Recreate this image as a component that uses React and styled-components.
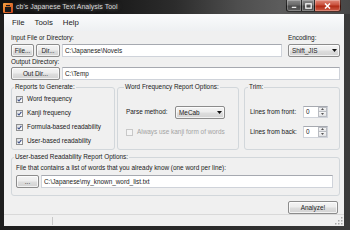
import React from "react";
import styled, { createGlobalStyle } from "styled-components";

const GlobalStyle = createGlobalStyle`
  html, body {
    margin: 0;
    padding: 0;
    background: #282828;
  }
  body {
    width: 350px;
    height: 230px;
    overflow: hidden;
    font-family: "Liberation Sans", Arial, sans-serif;
  }
`;

/// WINDOW CHROME
const Window = styled.div`
  width: 350px;
  height: 230px;
  display: flex;
  flex-direction: column;
  background: linear-gradient(90deg, #1e1e1e 0%, #2a2a2a 60%, #3a3a3a 100%);
`;

const TitleBar = styled.div`
  height: 14px;
  flex: none;
  display: flex;
  align-items: flex-start;
  background: linear-gradient(
    90deg,
    #111 0%,
    #181818 30%,
    #2c2c2c 50%,
    #4e4e4e 68%,
    #5c5c5c 80%,
    #474747 100%
  );
`;

const AppIcon = styled.svg`
  width: 10px;
  height: 10px;
  margin: 3px 3px 0 3px;
  flex: none;
`;

const Title = styled.span`
  font-size: 7px;
  line-height: 14px;
  color: #d6d6d6;
  text-shadow: 0 0 4px rgba(150, 150, 150, 0.8);
  white-space: nowrap;
`;

const Caption = styled.div`
  margin-left: auto;
  margin-right: 9px;
  display: flex;
`;

const CapButton = styled.div`
  width: ${(p) => p.$w}px;
  height: 12px;
  box-sizing: border-box;
  display: flex;
  align-items: center;
  justify-content: center;
  border: 1px solid rgba(0, 0, 0, 0.65);
  border-top: none;
  border-left-width: ${(p) => (p.$first ? 1 : 0)}px;
  border-radius: ${(p) => (p.$first ? "0 0 0 3px" : p.$last ? "0 0 3px 0" : "0")};
  box-shadow: inset 0 0 0 1px rgba(255, 255, 255, 0.25);
  background: ${(p) =>
    p.$close
      ? "linear-gradient(#e08a7a 0%, #c9503c 45%, #b02a14 55%, #d0604a 100%)"
      : "linear-gradient(#8a8a8a 0%, #6a6a6a 45%, #4a4a4a 55%, #5e5e5e 100%)"};
`;

const Frame = styled.div`
  flex: 1;
  display: flex;
  padding: 0 6px 4px 4px;
  min-height: 0;
`;

const Client = styled.div`
  flex: 1;
  display: flex;
  flex-direction: column;
  background: #f0f0f0;
`;

/// MENU
const MenuBar = styled.div`
  height: 17px;
  flex: none;
  display: flex;
  align-items: center;
  padding-left: 3px;
  background: linear-gradient(#fafbfc, #eef0f2);
`;

const MenuItem = styled.span`
  font-size: 7.8px;
  color: #1b1b1b;
  padding: 0 5px;
`;

/// BODY
const Body = styled.div`
  flex: 1;
  display: flex;
  flex-direction: column;
  padding: 0 4px 0 7px;
`;

const Label = styled.div`
  font-size: 6.4px;
  line-height: 8px;
  height: 8px;
  color: ${(p) => (p.$disabled ? "#a3a3a3" : "#202020")};
  margin-top: ${(p) => p.$mt || 0}px;
  white-space: nowrap;
`;

const TopRow = styled.div`
  display: flex;
  gap: 6px;
`;

const Column = styled.div`
  display: flex;
  flex-direction: column;
  flex: ${(p) => (p.$w ? "none" : 1)};
  width: ${(p) => (p.$w ? `${p.$w}px` : "auto")};
`;

const Controls = styled.div`
  display: flex;
  gap: 2px;
  margin-top: ${(p) => p.$mt || 0}px;
`;

const Button = styled.div`
  width: ${(p) => p.$w}px;
  height: 13px;
  flex: none;
  box-sizing: border-box;
  border: 1px solid #8c8c8c;
  border-radius: 2px;
  background: linear-gradient(#f4f4f4 0%, #ececec 48%, #dedede 52%, #d2d2d2 100%);
  box-shadow: inset 0 0 0 1px rgba(255, 255, 255, 0.7);
  display: flex;
  align-items: center;
  justify-content: center;
  font-size: 6.4px;
  color: #1c1c1c;
  white-space: nowrap;
`;

const TextBox = styled.div`
  flex: 1;
  height: 13px;
  box-sizing: border-box;
  background: #fff;
  border: 1px solid #cfd3da;
  border-top-color: #a6a9b0;
  display: flex;
  align-items: center;
  padding-left: 2px;
  font-size: 6.4px;
  color: #1c1c1c;
  white-space: nowrap;
  overflow: hidden;
`;

const Combo = styled(Button)`
  justify-content: space-between;
  padding: 0 2px 0 3px;
`;

const Arrow = ({ size = 5 }) => (
  <svg width={size} height={size * 0.6} viewBox="0 0 5 3">
    <path d="M0 0 H5 L2.5 3 Z" fill="#111" />
  </svg>
);

/// GROUP BOXES
const GroupsRow = styled.div`
  display: flex;
  margin-top: 3px;
  height: 67px;
`;

const Group = styled.fieldset`
  margin: 0;
  margin-left: ${(p) => p.$ml || 0}px;
  margin-top: ${(p) => p.$mt || 0}px;
  padding: 0 ${(p) => p.$pr || 4}px ${(p) => p.$pb || 0}px ${(p) => p.$pl || 4}px;
  min-width: 0;
  box-sizing: border-box;
  width: ${(p) => (p.$w ? `${p.$w}px` : "auto")};
  flex: ${(p) => (p.$w ? "none" : 1)};
  border: 1px solid #d2d7db;
  border-radius: 3px;
  display: flex;
  flex-direction: column;
`;

const Legend = styled.legend`
  font-size: 6.4px;
  line-height: 8px;
  color: #202020;
  padding: 0 1px;
  margin-left: -2px;
  white-space: nowrap;
`;

const CheckRow = styled.div`
  display: flex;
  align-items: center;
  gap: 4px;
  height: 14px;
  margin-top: ${(p) => p.$mt || 0}px;
`;

const Box = styled.span`
  width: 7px;
  height: 7px;
  flex: none;
  box-sizing: border-box;
  border: 1px solid ${(p) => (p.$disabled ? "#c8c8c8" : "#8f9090")};
  background: ${(p) =>
    p.$disabled ? "#f4f4f4" : "linear-gradient(135deg, #d6d9de 0%, #f7f7f7 70%, #fff 100%)"};
  display: flex;
  align-items: center;
  justify-content: center;
`;

const Check = ({ checked, disabled, children }) => (
  <>
    <Box $disabled={disabled}>
      {checked && (
        <svg width="5" height="5" viewBox="0 0 5 5">
          <path d="M0.6 2.6 L2 4 L4.4 0.8" fill="none" stroke="#3d4f86" strokeWidth="1.1" />
        </svg>
      )}
    </Box>
    <Label $disabled={disabled}>{children}</Label>
  </>
);

const FieldRow = styled.div`
  display: flex;
  align-items: center;
  height: ${(p) => p.$h || 14}px;
  margin-top: ${(p) => p.$mt || 0}px;
`;

const RowLabel = styled(Label)`
  width: ${(p) => p.$w}px;
  flex: none;
`;

const Spin = styled.div`
  width: 25px;
  height: 12px;
  box-sizing: border-box;
  display: flex;
  background: #fff;
  border: 1px solid #cfd3da;
  border-top-color: #a6a9b0;
`;

const SpinValue = styled.span`
  flex: 1;
  font-size: 6.4px;
  line-height: 10px;
  padding-left: 2px;
  color: #1c1c1c;
`;

const SpinButtons = styled.div`
  width: 9px;
  display: flex;
  flex-direction: column;
`;

const SpinButton = styled.div`
  flex: 1;
  display: flex;
  align-items: center;
  justify-content: center;
  border: 1px solid #b9bcc2;
  margin-top: ${(p) => (p.$down ? -1 : 0)}px;
  background: linear-gradient(#f6f6f6, #e2e3e6);
`;

const TinyArrow = ({ up }) => (
  <svg width="3" height="2" viewBox="0 0 3 2">
    <path d={up ? "M0 2 H3 L1.5 0 Z" : "M0 0 H3 L1.5 2 Z"} fill="#555" />
  </svg>
);

const Footer = styled.div`
  display: flex;
  justify-content: flex-end;
  margin-top: 5px;
  padding-right: 2px;
`;

/// STATUS BAR
const StatusBar = styled.div`
  margin-top: auto;
  height: 11px;
  flex: none;
  display: flex;
  border-top: 1px solid #d9d9d9;
  background: #f0f0f0;
`;

const StatusPane = styled.div`
  width: ${(p) => (p.$w ? `${p.$w}px` : "auto")};
  flex: ${(p) => (p.$w ? "none" : 1)};
  display: flex;
  align-items: flex-end;
  justify-content: flex-end;
  padding: 2px 0 1px;
  border-right: ${(p) => (p.$w ? "1px solid #c8c8c8" : "none")};
  margin: ${(p) => (p.$w ? "2px 0 1px" : "0")};
`;

const Grip = () => (
  <svg width="8" height="8" viewBox="0 0 8 8" style={{ marginRight: 1 }}>
    {[
      [6, 0],
      [6, 3],
      [3, 3],
      [6, 6],
      [3, 6],
      [0, 6],
    ].map(([x, y]) => (
      <rect key={`${x}-${y}`} x={x} y={y} width="1.5" height="1.5" fill="#a8a8a8" />
    ))}
  </svg>
);

const SpinBox = ({ value }) => (
  <Spin>
    <SpinValue>{value}</SpinValue>
    <SpinButtons>
      <SpinButton>
        <TinyArrow up />
      </SpinButton>
      <SpinButton $down>
        <TinyArrow />
      </SpinButton>
    </SpinButtons>
  </Spin>
);

export default function App() {
  return (
    <>
      <GlobalStyle />
      <Window>
        <TitleBar>
          <AppIcon viewBox="0 0 10 10">
            <defs>
              <linearGradient id="ic" x1="0" y1="0" x2="1" y2="1">
                <stop offset="0" stopColor="#f7a440" />
                <stop offset="1" stopColor="#c8401c" />
              </linearGradient>
            </defs>
            <rect x="0" y="0" width="10" height="10" rx="1" fill="url(#ic)" />
            <rect x="2" y="4" width="6" height="5" fill="#1a1a1a" />
            <rect x="3" y="2" width="4" height="1.2" fill="#1a1a1a" />
          </AppIcon>
          <Title>cb's Japanese Text Analysis Tool</Title>
          <Caption>
            <CapButton $w={16} $first>
              <svg width="6" height="6" viewBox="0 0 6 6">
                <rect x="0.5" y="3.5" width="5" height="1.6" fill="#fff" stroke="#333" strokeWidth="0.4" />
              </svg>
            </CapButton>
            <CapButton $w={13}>
              <svg width="7" height="6" viewBox="0 0 7 6">
                <rect x="0.8" y="0.8" width="5.4" height="4.4" fill="none" stroke="#fff" strokeWidth="1.2" />
              </svg>
            </CapButton>
            <CapButton $w={26} $close $last>
              <svg width="7" height="6" viewBox="0 0 7 6">
                <path d="M1 0.5 L6 5.5 M6 0.5 L1 5.5" stroke="#fff" strokeWidth="1.5" />
              </svg>
            </CapButton>
          </Caption>
        </TitleBar>
        <Frame>
          <Client>
            <MenuBar>
              <MenuItem>File</MenuItem>
              <MenuItem>Tools</MenuItem>
              <MenuItem>Help</MenuItem>
            </MenuBar>
            <Body>
              <TopRow>
                <Column>
                  <Label $mt={3}>Input File or Directory:</Label>
                  <Controls $mt={2}>
                    <Button $w={23}>File...</Button>
                    <Button $w={24}>Dir...</Button>
                    <TextBox>C:\Japanese\Novels</TextBox>
                  </Controls>
                </Column>
                <Column $w={52}>
                  <Label $mt={3}>Encoding:</Label>
                  <Controls $mt={2}>
                    <Combo $w={52}>
                      <span>Shift_JIS</span>
                      <Arrow />
                    </Combo>
                  </Controls>
                </Column>
              </TopRow>
              <Label $mt={1}>Output Directory:</Label>
              <Controls $mt={1}>
                <Button $w={49}>Out Dir...</Button>
                <TextBox>C:\Temp</TextBox>
              </Controls>

              <GroupsRow>
                <Group $w={104} $pl={4}>
                  <Legend>Reports to Generate:</Legend>
                  <CheckRow $mt={1}>
                    <Check checked>Word frequency</Check>
                  </CheckRow>
                  <CheckRow>
                    <Check checked>Kanji frequency</Check>
                  </CheckRow>
                  <CheckRow>
                    <Check checked>Formula-based readability</Check>
                  </CheckRow>
                  <CheckRow>
                    <Check checked>User-based readability</Check>
                  </CheckRow>
                </Group>
                <Group $w={122} $ml={2} $pl={8}>
                  <Legend>Word Frequency Report Options:</Legend>
                  <FieldRow $mt={14}>
                    <RowLabel $w={49}>Parse method:</RowLabel>
                    <Combo $w={50}>
                      <span>MeCab</span>
                      <Arrow />
                    </Combo>
                  </FieldRow>
                  <CheckRow $mt={6}>
                    <Check disabled>Always use kanji form of words</Check>
                  </CheckRow>
                </Group>
                <Group $ml={5} $pl={5}>
                  <Legend>Trim:</Legend>
                  <FieldRow $mt={14} $h={13}>
                    <RowLabel $w={53}>Lines from front:</RowLabel>
                    <SpinBox value="0" />
                  </FieldRow>
                  <FieldRow $mt={7} $h={13}>
                    <RowLabel $w={53}>Lines from back:</RowLabel>
                    <SpinBox value="0" />
                  </FieldRow>
                </Group>
              </GroupsRow>

              <Group $mt={3} $pl={4} $pr={6} $pb={3}>
                <Legend>User-based Readability Report Options:</Legend>
                <Label $mt={3}>
                  File that contains a list of words that you already know (one word per line):
                </Label>
                <Controls $mt={3}>
                  <Button $w={23}>...</Button>
                  <TextBox>C:\Japanese\my_known_word_list.txt</TextBox>
                </Controls>
              </Group>

              <Footer>
                <Button $w={50}>Analyze!</Button>
              </Footer>
            </Body>
            <StatusBar>
              <StatusPane $w={48} />
              <StatusPane>
                <Grip />
              </StatusPane>
            </StatusBar>
          </Client>
        </Frame>
      </Window>
    </>
  );
}
